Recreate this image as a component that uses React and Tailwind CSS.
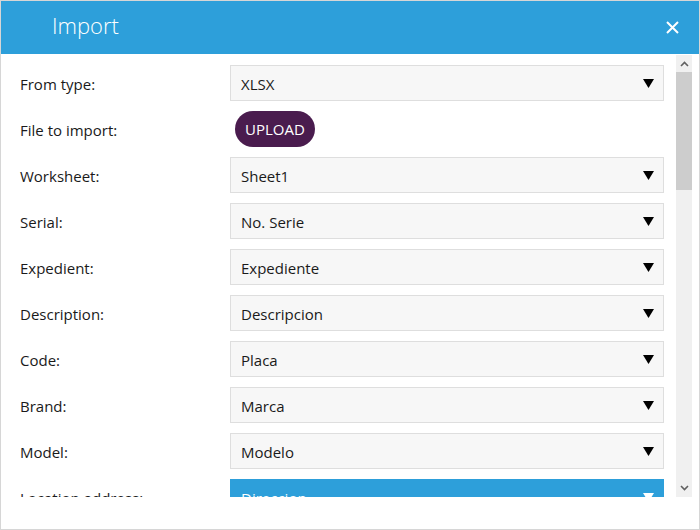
const rows = [
  { label: "From type:", value: "XLSX" },
  { label: "File to import:", upload: true },
  { label: "Worksheet:", value: "Sheet1" },
  { label: "Serial:", value: "No. Serie" },
  { label: "Expedient:", value: "Expediente" },
  { label: "Description:", value: "Descripcion" },
  { label: "Code:", value: "Placa" },
  { label: "Brand:", value: "Marca" },
  { label: "Model:", value: "Modelo" },
  { label: "Location address:", value: "Direccion", active: true },
];

function Caret({ light }) {
  return (
    <svg width="11" height="11" viewBox="0 0 11 11" className={light ? "fill-white" : "fill-black"}>
      <path d="M0 1h11L5.5 10z" />
    </svg>
  );
}

function Row({ row }) {
  return (
    <div className="flex items-center h-[36px]">
      <div className="w-[229px] shrink-0 pl-[19px] pt-[2px] text-[15px] text-[#1a1a1a]">{row.label}</div>
      {row.upload ? (
        <button className="ml-[5px] h-[36px] px-[10px] rounded-full bg-[#4a1c4e] text-white text-[15px]">
          UPLOAD
        </button>
      ) : (
        <div
          className={
            "flex-1 h-[36px] flex items-center justify-between pl-[10px] pr-[9px] border " +
            (row.active
              ? "bg-[#2d9fda] border-[#2d9fda] text-white"
              : "bg-[#f7f7f7] border-[#dedede] text-[#1a1a1a]")
          }
        >
          <span className="text-[15px] pt-[2px]">{row.value}</span>
          <Caret light={row.active} />
        </div>
      )}
    </div>
  );
}

export default function App() {
  return (
    <div
      className="w-[700px] h-[530px] bg-white border border-[#d6d6d6] flex flex-col overflow-hidden"
      style={{ fontFamily: '"Open Sans", "Noto Sans", sans-serif' }}
    >
      <div className="h-[53px] bg-[#2d9fda] flex items-center justify-between pl-[51px] pr-[20px] shrink-0">
        <h1 className="text-white text-[22px] font-light -mt-[4px]">Import</h1>
        <svg width="13" height="13" viewBox="0 0 13 13" className="stroke-white" strokeWidth="2">
          <path d="M1 1l11 11M12 1L1 12" />
        </svg>
      </div>

      <div className="h-[442px] flex mt-[1px] shrink-0">
        <div className="flex-1 overflow-hidden pt-[10px] pr-[12px] flex flex-col gap-[10px]">
          {rows.map((r) => (
            <Row key={r.label} row={r} />
          ))}
        </div>
        <div className="w-[16px] bg-[#f0f0f0] flex flex-col items-center mr-[7px]">
          <div className="h-[17px] flex items-center justify-center">
            <svg width="9" height="6" viewBox="0 0 9 6" fill="none" stroke="#606060" strokeWidth="1.6">
              <path d="M1 5l3.5-3.5L8 5" />
            </svg>
          </div>
          <div className="w-[16px] h-[118px] bg-[#cdcdcd]" />
          <div className="flex-1" />
          <div className="h-[17px] flex items-center justify-center mb-[1px]">
            <svg width="9" height="6" viewBox="0 0 9 6" fill="none" stroke="#606060" strokeWidth="1.6">
              <path d="M1 1l3.5 3.5L8 1" />
            </svg>
          </div>
        </div>
      </div>
    </div>
  );
}
